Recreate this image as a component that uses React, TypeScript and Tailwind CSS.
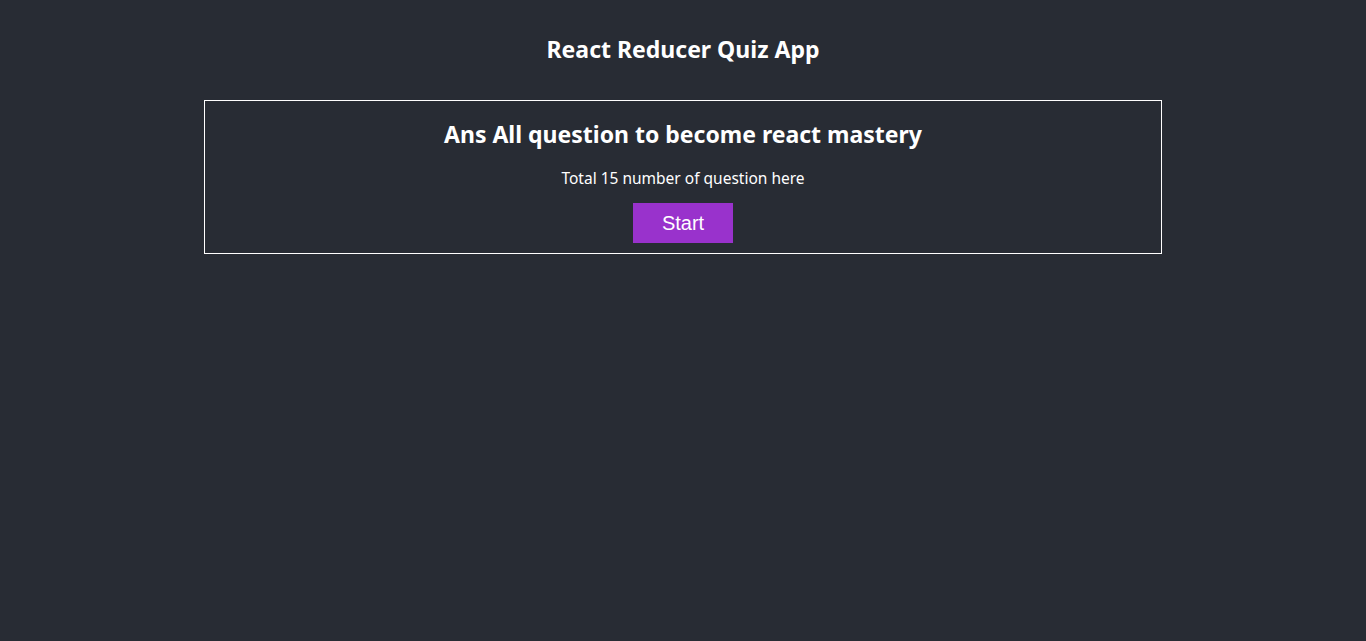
import React from "react";

export default function App() {
  return (
    <div
      className="min-h-screen bg-[#282c34] text-white"
      style={{ fontFamily: '"Noto Sans", "Open Sans", sans-serif' }}
    >
      <div className="flex flex-col items-center pt-[34px]">
        {/* Header */}
        <h1 className="text-[23px] leading-[30px] font-bold">
          React Reducer Quiz App
        </h1>

        {/* Start card */}
        <div className="mt-[36px] w-[958px] border border-white flex flex-col items-center pt-[17px] pb-[10px]">
          <h2 className="text-[23px] leading-[32px] font-bold">
            Ans All question to become react mastery
          </h2>
          <p className="mt-[18px] text-[15.5px] leading-[20px]">
            Total 15 number of question here
          </p>
          <button
            className="mt-[15px] w-[100px] h-[40px] bg-[#9932cc] text-[20px] text-white"
            style={{ fontFamily: '"Liberation Sans", Arial, sans-serif' }}
          >
            Start
          </button>
        </div>
      </div>
    </div>
  );
}
